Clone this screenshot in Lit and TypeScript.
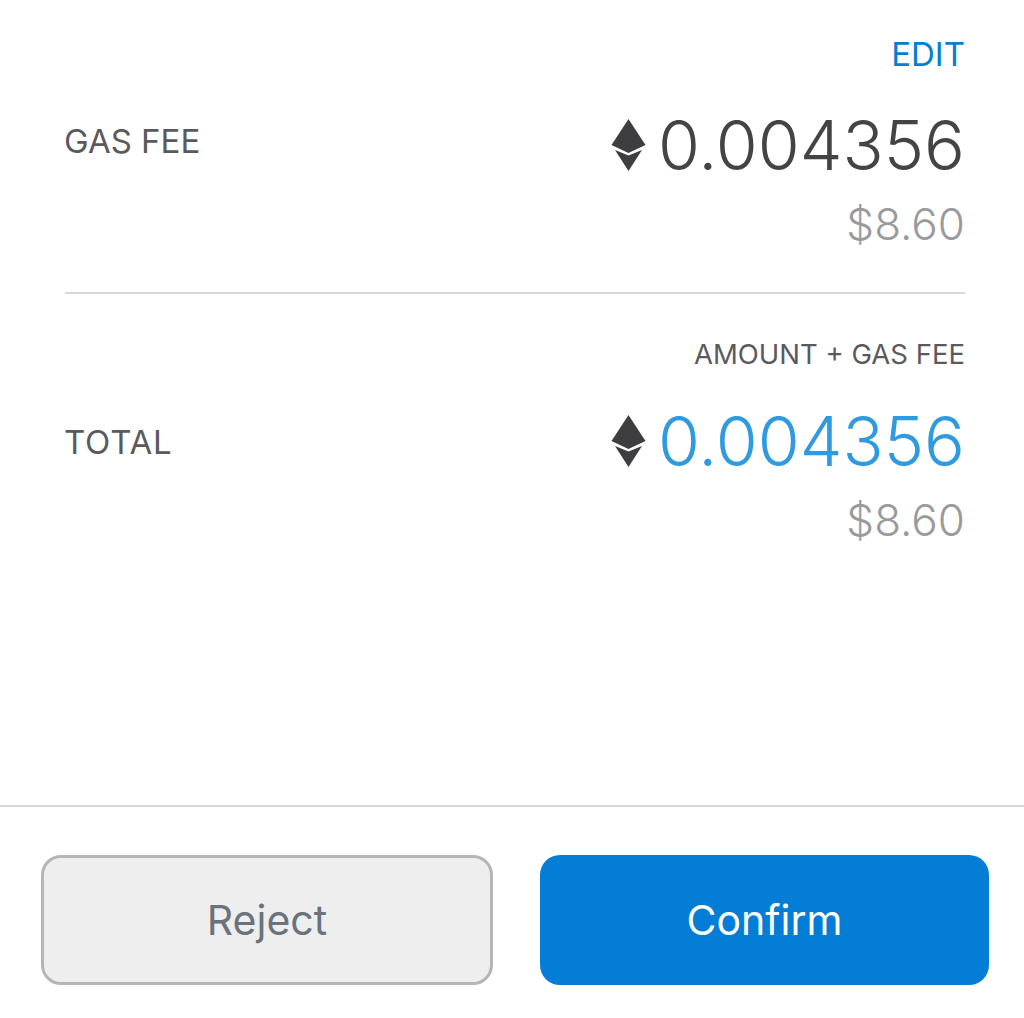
import { LitElement, html, css } from "lit";
import { customElement } from "lit/decorators.js";

const eth = html`<svg class="eth" viewBox="0 0 35 52" aria-hidden="true">
  <path fill="#3e3e40" d="M17.5 0 L34.5 26 L17.5 34 L0.5 26 Z"/>
  <path fill="#3e3e40" d="M4 31 L17.5 36.5 L31 31 L17.5 52 Z"/>
</svg>`;

@customElement("app-root")
export class AppRoot extends LitElement {
  static styles = css`
    :host {
      display: block;
      width: 1024px;
      height: 1018px;
      background: #fff;
      font-family: "Inter", "Lato", sans-serif;
      overflow: hidden;
    }
    .page { display: flex; flex-direction: column; height: 1018px; }
    .content { flex: 1; padding: 0 59px 0 65px; display: flex; flex-direction: column; }
    .section { display: flex; flex-direction: column; }
    .first { height: 292px; padding-top: 34px; box-sizing: border-box; }
    .second { padding-top: 47px; border-top: 2px solid #d6d9dc; }
    .hint { text-align: right; line-height: 40px; height: 40px; margin-bottom: 33px; font-size: 33px; color: #037dd6; }
    .hint.dark { font-size: 27.5px; line-height: 26px; height: 26px; margin-bottom: 36px; color: #5a5a5c; }
    .row { display: flex; justify-content: space-between; align-items: flex-start; }
    .label { font-size: 33px; line-height: 40px; color: #5a5a5c; margin: 14px 0 0 -1px; }
    .second .label { margin-top: 19px; letter-spacing: 0.8px; }
    .values { display: flex; flex-direction: column; align-items: flex-end; }
    .amount { display: flex; align-items: center; gap: 12px; font-size: 68px; line-height: 76px; font-weight: 350; color: #444446; }
    .amount.blue { color: #2f9ae0; }
    .eth { width: 35px; height: 52px; flex: none; }
    .fiat { font-size: 44px; line-height: 50px; color: #9a9a9c; font-weight: 350; margin-top: 16px; }
    .footer { border-top: 2px solid #d6d9dc; height: 213px; box-sizing: border-box; padding: 48px 35px 0 41px; display: flex; gap: 47px; align-items: flex-start; }
    .btn { height: 130px; border-radius: 20px; box-sizing: border-box; font: inherit; font-size: 41px; display: flex; align-items: center; justify-content: center; }
    .reject { width: 452px; background: #eee; border: 3px solid #b5b5b5; color: #6a737d; }
    .confirm { width: 449px; background: #037dd6; border: 0; color: #fff; }
  `;

  render() {
    return html`<div class="page">
      <div class="content">
        <div class="section first">
          <div class="hint">EDIT</div>
          <div class="row">
            <div class="label">GAS FEE</div>
            <div class="values">
              <div class="amount">${eth}<span>0.004356</span></div>
              <div class="fiat">$8.60</div>
            </div>
          </div>
        </div>
        <div class="section second">
          <div class="hint dark">AMOUNT + GAS FEE</div>
          <div class="row">
            <div class="label">TOTAL</div>
            <div class="values">
              <div class="amount blue">${eth}<span>0.004356</span></div>
              <div class="fiat">$8.60</div>
            </div>
          </div>
        </div>
      </div>
      <div class="footer">
        <button class="btn reject">Reject</button>
        <button class="btn confirm">Confirm</button>
      </div>
    </div>`;
  }
}
